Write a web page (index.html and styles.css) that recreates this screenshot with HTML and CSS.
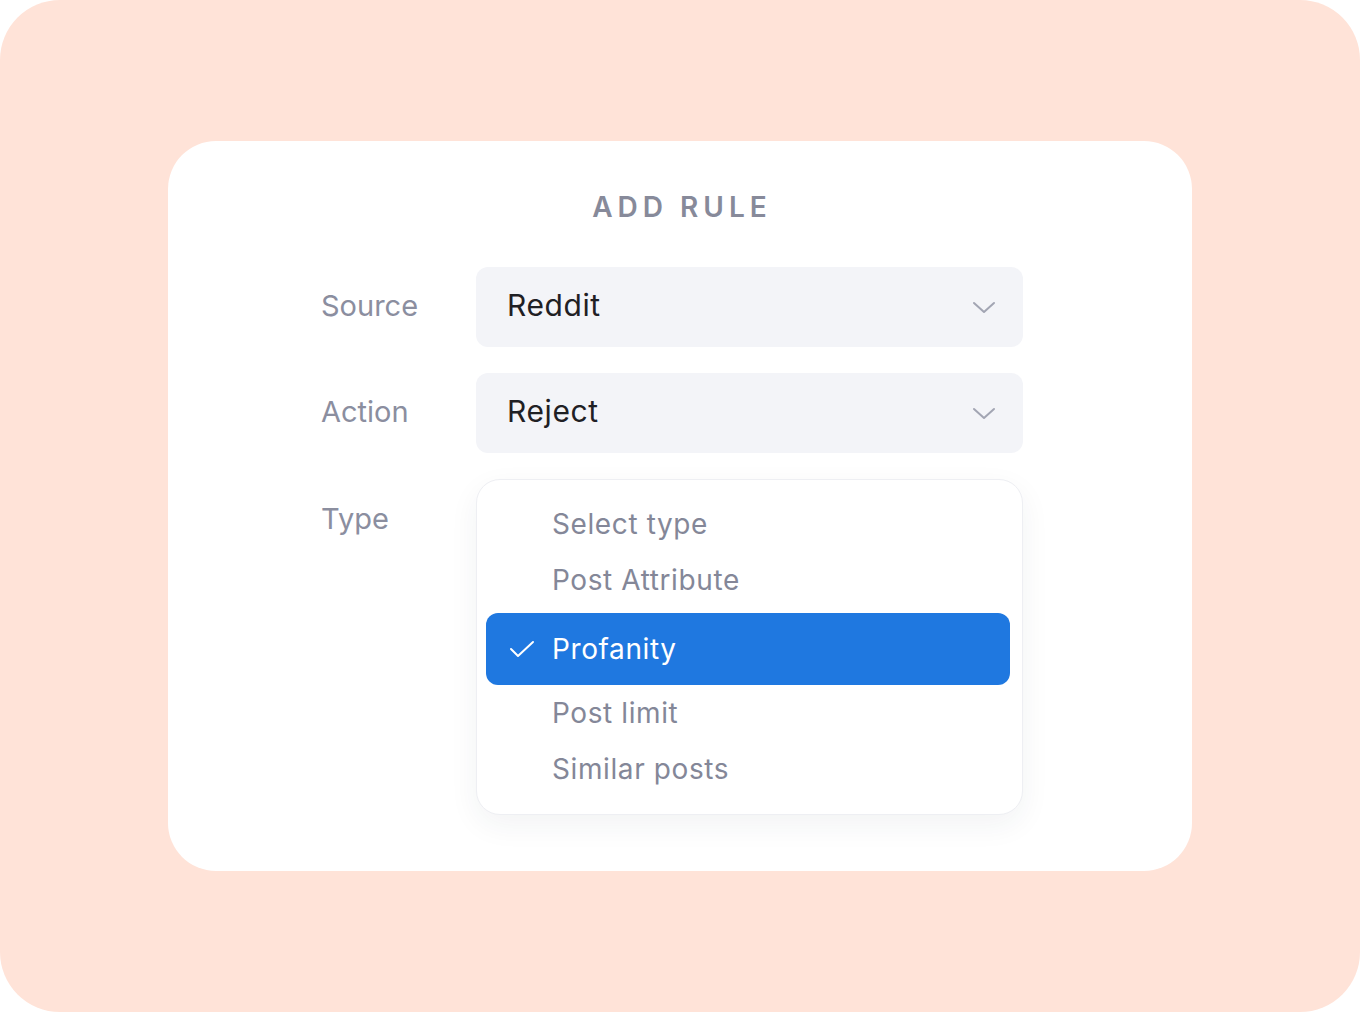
FILE: index.html
```html
<!DOCTYPE html>
<html lang="en">
<head>
  <meta charset="UTF-8" />
  <meta name="viewport" content="width=device-width, initial-scale=1.0"/>
  <title>Add Rule</title>
  <link rel="stylesheet" href="styles.css">
</head>
<body>

  <div class="frame">
    <div class="card">
      <h2 class="title">ADD RULE</h2>

      <div class="row">
        <label class="label">Source</label>
        <div class="select">
          <span>Reddit</span>
          <svg class="chevron" width="24" height="14" viewBox="0 0 24 14"><path d="M2 2 L12 11 L22 2" fill="none" stroke="#a2a5b3" stroke-width="2" stroke-linecap="round" stroke-linejoin="round"/></svg>
        </div>
      </div>

      <div class="row">
        <label class="label">Action</label>
        <div class="select">
          <span>Reject</span>
          <svg class="chevron" width="24" height="14" viewBox="0 0 24 14"><path d="M2 2 L12 11 L22 2" fill="none" stroke="#a2a5b3" stroke-width="2" stroke-linecap="round" stroke-linejoin="round"/></svg>
        </div>
      </div>

      <div class="row row-top">
        <label class="label label-type">Type</label>
        <div class="dropdown">
          <div class="option">Select type</div>
          <div class="option">Post Attribute</div>
          <div class="option selected">
            <svg class="check" width="26" height="18" viewBox="0 0 26 18"><path d="M2 9 L9 16 L24 2" fill="none" stroke="#ffffff" stroke-width="2" stroke-linecap="round" stroke-linejoin="round"/></svg>
            Profanity
          </div>
          <div class="option">Post limit</div>
          <div class="option">Similar posts</div>
        </div>
      </div>
    </div>
  </div>

</body>
</html>
```

FILE: styles.css
```css
body {
  margin: 0;
  background: #ffffff;
  font-family: Inter, "Noto Sans", sans-serif;
}

.frame {
  width: 1360px;
  height: 1012px;
  background: #ffe3d8;
  border-radius: 60px;
  display: flex;
  justify-content: center;
  align-items: center;
}

.card {
  width: 1024px;
  height: 730px;
  box-sizing: border-box;
  background: #ffffff;
  border-radius: 48px;
  padding: 48px 0 0 153px;
  display: flex;
  flex-direction: column;
  gap: 26px;
}

.title {
  margin: 1px 0 17px -149px;
  font-size: 28px;
  line-height: 34px;
  font-weight: 600;
  letter-spacing: 5px;
  color: #878a9a;
  text-align: center;
}

.row {
  display: flex;
  align-items: center;
}

.row-top {
  align-items: flex-start;
}

.label {
  width: 155px;
  margin-top: -4px;
  font-size: 29px;
  color: #8b8e9f;
}

.label-type {
  margin-top: 0;
  padding-top: 22px;
}

.select {
  width: 547px;
  height: 80px;
  box-sizing: border-box;
  background: #f3f4f8;
  border-radius: 12px;
  padding: 0 27px 0 31px;
  display: flex;
  align-items: center;
  justify-content: space-between;
  font-size: 30px;
  letter-spacing: 0.6px;
  color: #1f2024;
}

.select span {
  margin-top: -4px;
}

.chevron {
  margin-top: 2px;
}

.dropdown {
  width: 547px;
  height: 336px;
  box-sizing: border-box;
  background: #ffffff;
  border: 1px solid #eeeff3;
  border-radius: 24px;
  box-shadow: 0 10px 30px rgba(40, 45, 70, 0.06);
  padding: 16px 12px 0 9px;
}

.option {
  height: 56px;
  display: flex;
  align-items: center;
  padding-left: 66px;
  font-size: 28px;
  letter-spacing: 0.6px;
  color: #848798;
  position: relative;
}

.option.selected {
  height: 72px;
  margin-top: 5px;
  background: #1f78e0;
  border-radius: 12px;
  color: #ffffff;
}

.check {
  position: absolute;
  left: 23px;
  top: 27px;
}
```
